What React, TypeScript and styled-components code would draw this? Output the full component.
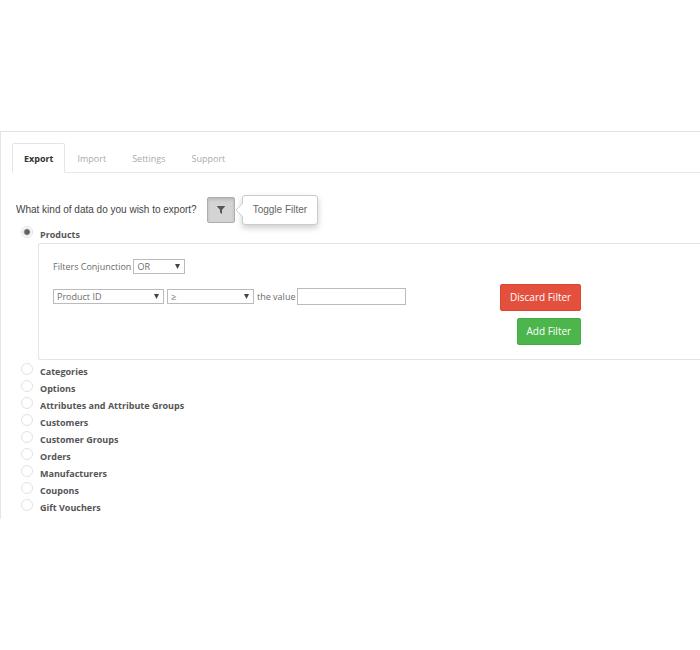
import React, { useState } from "react";
import styled, { createGlobalStyle, css } from "styled-components";

const GlobalStyle = createGlobalStyle`
  *, *::before, *::after { box-sizing: border-box; }
  body {
    margin: 0;
    background: #fff;
    color: #6c6c6c;
    font: 9px/17px "Open Sans", sans-serif;
  }
  button, select, input { font: inherit; color: inherit; margin: 0; }
`;

const Page = styled.main`
  padding: 131px 0;
  overflow-x: hidden;
`;

const Panel = styled.section`
  border-top: 1px solid #e2e2e2;
  border-left: 1px solid #e4e4e4;
  padding: 11px 0 3px 11px;
`;

const TabBar = styled.div`
  display: flex;
  border-bottom: 1px solid #e8e8e8;
`;

const Tab = styled.button<{ $active: boolean }>`
  height: 30px;
  margin-bottom: -1px;
  padding: 0 12px;
  border: 1px solid transparent;
  border-radius: 2px 2px 0 0;
  background: none;
  color: #aaa;
  cursor: pointer;
  ${(p) =>
    p.$active &&
    css`
      padding: 0 10px 0 11px;
      border-color: #e4e4e4;
      border-bottom-color: #fff;
      background: #fff;
      color: #333;
      font-weight: 700;
    `}
`;

const ExportForm = styled.form`
  padding: 24px 0 0 4px;
`;

const Question = styled.div`
  display: flex;
  align-items: center;
  gap: 10px;
  margin-bottom: 3px;
  color: #444;
  font: 10px/26px "Liberation Sans", Arial, sans-serif;
`;

const FilterToggle = styled.div`
  position: relative;
  display: flex;
`;

const ToggleButton = styled.button`
  display: flex;
  align-items: center;
  justify-content: center;
  width: 28px;
  height: 26px;
  padding: 0;
  border: 1px solid #adadad;
  border-radius: 2px;
  background: #d4d4d4;
  box-shadow: inset 0 2px 3px rgba(0, 0, 0, 0.12);
  color: #555;
  cursor: pointer;
`;

const Tooltip = styled.div`
  position: absolute;
  left: 100%;
  top: 50%;
  transform: translateY(-50%);
  margin-left: 7px;
  padding: 0 10px;
  border: 1px solid #ccc;
  border-radius: 3px;
  background: #fff;
  box-shadow: 0 3px 6px rgba(0, 0, 0, 0.2);
  color: #666;
  line-height: 28px;
  white-space: nowrap;
`;

const TooltipArrow = styled.svg`
  position: absolute;
  right: 100%;
  top: 7px;
`;

const TypeList = styled.div`
  display: flex;
  flex-direction: column;
`;

const TypeLabel = styled.label`
  display: flex;
  align-items: flex-start;
  gap: 7px;
  height: 17px;
  padding-left: 5px;
  color: #555;
  font-weight: 700;
  cursor: pointer;
`;

const Radio = styled.input`
  appearance: none;
  flex: none;
  width: 12px;
  height: 12px;
  border: 1px solid #e2e2e2;
  border-radius: 50%;
  background: #fff;
  &:checked {
    background: radial-gradient(circle, #606060 2px, #fff 4px);
  }
`;

const FilterBox = styled.div`
  display: flex;
  flex-direction: column;
  gap: 9px;
  margin: 0 0 3px 22px;
  padding: 14px;
  border: 1px solid #e4e4e4;
  border-right: 0;
  border-radius: 3px 0 0 3px;
`;

const InlineField = styled.label`
  display: flex;
  align-items: center;
  gap: 2px;
`;

const Conditions = styled.div`
  display: grid;
  grid-template-columns: minmax(0, 447px) auto;
  justify-content: start;
`;

const Condition = styled.div`
  display: flex;
  align-items: center;
  gap: 3px;
  height: 25px;
`;

const Actions = styled.div`
  display: flex;
  flex-direction: column;
  align-items: flex-end;
  gap: 7px;
`;

const SelectWrap = styled.span<{ $width: number }>`
  position: relative;
  display: flex;
  flex: none;
  width: ${(p) => p.$width}px;
`;

const SelectControl = styled.select`
  appearance: none;
  width: 100%;
  height: 15px;
  padding: 0 14px 0 3px;
  border: 1px solid #bbb;
  border-radius: 0;
  background: #fff;
  line-height: 13px;
`;

const SelectArrow = styled.svg`
  position: absolute;
  right: 5px;
  top: 5px;
  pointer-events: none;
`;

const ValueInput = styled.input`
  width: 109px;
  height: 17px;
  padding: 0 3px;
  border: 1px solid #bbb;
  background: #fff;
`;

const ActionButton = styled.button<{ $tone: "danger" | "success" }>`
  height: 27px;
  padding: 0 9px;
  border: 1px solid ${(p) => (p.$tone === "danger" ? "#dc4532" : "#47aa47")};
  border-radius: 2px;
  background: ${(p) => (p.$tone === "danger" ? "#e4503e" : "#4cb64c")};
  color: #fff;
  font-size: 10px;
  white-space: nowrap;
  cursor: pointer;
`;

const tabs = ["Export", "Import", "Settings", "Support"];
const types = [
  "Products",
  "Categories",
  "Options",
  "Attributes and Attribute Groups",
  "Customers",
  "Customer Groups",
  "Orders",
  "Manufacturers",
  "Coupons",
  "Gift Vouchers",
];

function Select(props: { label?: string; width: number; options: string[] }) {
  return (
    <SelectWrap $width={props.width}>
      <SelectControl aria-label={props.label}>
        {props.options.map((o) => (
          <option key={o}>{o}</option>
        ))}
      </SelectControl>
      <SelectArrow width="5" height="5" viewBox="0 0 5 5" aria-hidden="true">
        <path d="M0 0h5L2.5 5z" fill="#444" />
      </SelectArrow>
    </SelectWrap>
  );
}

function ProductFilter() {
  return (
    <FilterBox>
      <InlineField>
        Filters Conjunction
        <Select width={52} options={["OR", "AND"]} />
      </InlineField>
      <Conditions>
        <Condition>
          <Select label="Field" width={111} options={["Product ID", "Name", "Model"]} />
          <Select label="Comparison" width={87} options={["≥", "≤", "="]} />
          <InlineField>
            the value
            <ValueInput type="text" />
          </InlineField>
        </Condition>
        <Actions>
          <ActionButton type="button" $tone="danger">Discard Filter</ActionButton>
          <ActionButton type="button" $tone="success">Add Filter</ActionButton>
        </Actions>
      </Conditions>
    </FilterBox>
  );
}

export default function App() {
  const [tab, setTab] = useState("Export");
  const [type, setType] = useState("Products");
  const [showFilter, setShowFilter] = useState(true);

  return (
    <Page>
      <GlobalStyle />
      <Panel>
        <TabBar role="tablist">
          {tabs.map((t) => (
            <Tab key={t} type="button" role="tab" aria-selected={t === tab} $active={t === tab} onClick={() => setTab(t)}>
              {t}
            </Tab>
          ))}
        </TabBar>
        <ExportForm>
          <Question>
            <span>What kind of data do you wish to export?</span>
            <FilterToggle>
              <ToggleButton
                type="button"
                aria-label="Toggle Filter"
                aria-pressed={showFilter}
                onClick={() => setShowFilter(!showFilter)}
              >
                <svg width="8" height="8" viewBox="0 0 8 8" aria-hidden="true">
                  <path d="M0.3 0h7.4q.5.4.1.8L5 3.7V8L3 6.4V3.7L.2.8Q-.2.4.3 0z" fill="currentColor" />
                </svg>
              </ToggleButton>
              <Tooltip role="tooltip">
                <TooltipArrow width="8" height="14" viewBox="0 0 8 14" aria-hidden="true">
                  <path d="M8 0L1 7l7 7" fill="#fff" stroke="#ccc" />
                </TooltipArrow>
                Toggle Filter
              </Tooltip>
            </FilterToggle>
          </Question>
          <TypeList>
            {types.map((t) => (
              <React.Fragment key={t}>
                <TypeLabel>
                  <Radio type="radio" name="type" checked={t === type} onChange={() => setType(t)} />
                  {t}
                </TypeLabel>
                {t === "Products" && showFilter && <ProductFilter />}
              </React.Fragment>
            ))}
          </TypeList>
        </ExportForm>
      </Panel>
    </Page>
  );
}
